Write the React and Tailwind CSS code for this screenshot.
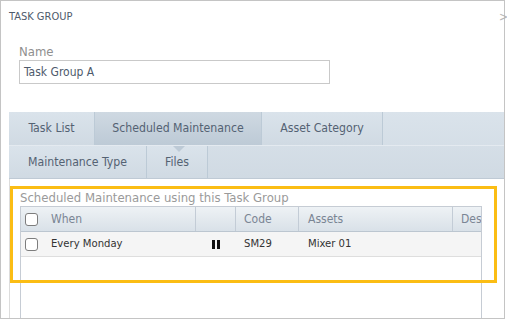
import React from "react";

const font = { fontFamily: '"DejaVu Sans Condensed", "Liberation Sans", sans-serif' };

const Check = () => (
  <span className="block w-[13px] h-[13px] rounded-[3px] border border-[#7d7d7d] bg-white" />
);

const PauseIcon = () => (
  <svg width="8" height="9" viewBox="0 0 8 9">
    <rect x="0" y="0" width="3" height="9" fill="#111" />
    <rect x="5" y="0" width="3" height="9" fill="#111" />
  </svg>
);

const Tab = ({ label, active, className = "" }) => (
  <div
    className={
      "relative shrink-0 flex items-center justify-center border-r border-[#bccad6] text-[12.2px] text-[#546273] " +
      (active
        ? "bg-gradient-to-b from-[#cfd9e2] to-[#bdcad6] "
        : "bg-gradient-to-b from-[#dae3eb] to-[#d0dae3] ") +
      className
    }
  >
    {label}
  </div>
);

export default function App() {
  return (
    <div className="relative w-[507px] h-[319px] overflow-hidden bg-white" style={font}>
      <div className="w-[505px] h-[319px] border border-[#c4c4c4] flex flex-col">
        {/* header */}
        <div className="flex items-center justify-between pl-[8px] pt-[9px] h-[23px]">
          <span className="text-[11px] leading-[14px] text-[#4e5a6b]">TASK GROUP</span>
          <span className="text-[12px] leading-[14px] text-[#b5b5b5] -mr-[4px]">&gt;</span>
        </div>

        {/* name field */}
        <div className="pl-[18px] mt-[20px]">
          <div className="text-[13px] leading-[16px] text-[#8f8f8f]">Name</div>
          <div className="w-[311px] h-[24px] border border-[#c9c9c9] flex items-center pl-[4px] text-[12px] text-[#4e5a6b]">
            Task Group A
          </div>
        </div>

        {/* tabs */}
        <div className="ml-[8px] mt-[28px] flex flex-col bg-gradient-to-b from-[#dae3eb] to-[#d0dae3]">
          <div className="flex h-[34px] border-b border-[#e4eaf0]">
            <Tab label="Task List" className="w-[86px]" />
            <Tab label="Scheduled Maintenance" active className="w-[167px]" />
            <Tab label="Asset Category" className="w-[121px]" />
          </div>
          <div className="relative flex h-[33px] border-b border-[#bfcad5]">
            <Tab label="Maintenance Type" className="w-[138px]" />
            <Tab label="Files" className="w-[61px]" />
            <span className="absolute left-[164px] top-0 w-0 h-0 border-l-[6px] border-r-[6px] border-t-[6px] border-l-transparent border-r-transparent border-t-[#bdcad6]" />
          </div>
        </div>

        {/* panel */}
        <div className="ml-[8px] flex-1 border-l border-[#dcdcdc] pl-[10px] pt-[11px] flex flex-col">
          <div className="text-[13px] leading-[16px] text-[#9a9a9a]">
            Scheduled Maintenance using this Task Group
          </div>
          <div className="w-[462px] flex-1 border-l border-r border-t border-[#c6ccd4] overflow-hidden">
            <div className="flex h-[25px] border-b border-[#bcc6d0] bg-gradient-to-b from-[#eef2f5] to-[#d9e1e8] text-[12px] text-[#7a8594] items-center">
              <div className="w-[30px] shrink-0 pl-[4px] flex items-center h-full"><Check /></div>
              <div className="w-[144px] shrink-0 flex items-center h-full">When</div>
              <div className="w-[40px] shrink-0 h-full border-l border-[#c3ccd6]" />
              <div className="w-[63px] shrink-0 h-full border-l border-[#c3ccd6] pl-[8px] flex items-center">Code</div>
              <div className="w-[154px] shrink-0 h-full border-l border-[#c3ccd6] pl-[9px] flex items-center">Assets</div>
              <div className="flex-1 h-full border-l border-[#c3ccd6] pl-[8px] flex items-center whitespace-nowrap overflow-hidden">Des</div>
            </div>
            <div className="flex h-[25px] border-b border-[#dedede] bg-[#f5f5f5] text-[11.2px] text-[#333] items-center">
              <div className="w-[30px] shrink-0 pl-[4px] flex items-center h-full"><Check /></div>
              <div className="w-[144px] shrink-0 flex items-center h-full">Every Monday</div>
              <div className="w-[40px] shrink-0 h-full flex items-center pl-[17px]"><PauseIcon /></div>
              <div className="w-[63px] shrink-0 h-full pl-[9px] flex items-center">SM29</div>
              <div className="w-[154px] shrink-0 h-full pl-[10px] flex items-center">Mixer 01</div>
            </div>
          </div>
        </div>
      </div>

      {/* highlight annotation */}
      <div className="absolute left-[10px] top-[186px] w-[487px] h-[97px] border-[3px] border-[#fbbd14] pointer-events-none" />
    </div>
  );
}
